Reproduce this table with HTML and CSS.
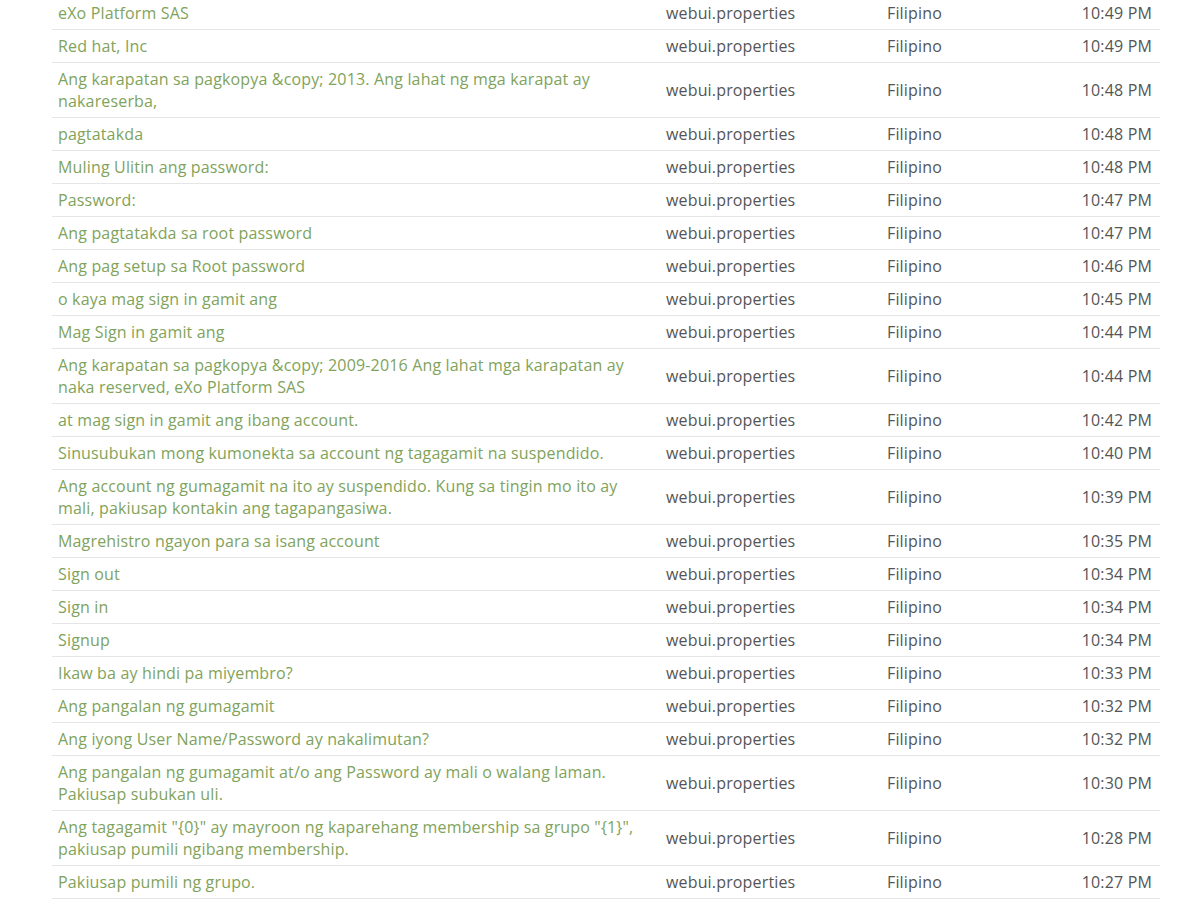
FILE: index.html
```html
<!DOCTYPE html>
<html>
<head>
<meta charset="utf-8">
<link rel="stylesheet" href="styles.css">
</head>
<body>
<table class="list">
<colgroup><col class="c-key"><col class="c-file"><col class="c-lang"><col class="c-time"></colgroup>
<tbody>
<tr><td class="key">eXo Platform SAS</td><td>webui.properties</td><td>Filipino</td><td class="time">10:49 PM</td></tr>
<tr><td class="key">Red hat, Inc</td><td>webui.properties</td><td>Filipino</td><td class="time">10:49 PM</td></tr>
<tr><td class="key">Ang karapatan sa pagkopya &amp;copy; 2013. Ang lahat ng mga karapat ay nakareserba,</td><td>webui.properties</td><td>Filipino</td><td class="time">10:48 PM</td></tr>
<tr><td class="key">pagtatakda</td><td>webui.properties</td><td>Filipino</td><td class="time">10:48 PM</td></tr>
<tr><td class="key">Muling Ulitin ang password:</td><td>webui.properties</td><td>Filipino</td><td class="time">10:48 PM</td></tr>
<tr><td class="key">Password:</td><td>webui.properties</td><td>Filipino</td><td class="time">10:47 PM</td></tr>
<tr><td class="key">Ang pagtatakda sa root password</td><td>webui.properties</td><td>Filipino</td><td class="time">10:47 PM</td></tr>
<tr><td class="key">Ang pag setup sa Root password</td><td>webui.properties</td><td>Filipino</td><td class="time">10:46 PM</td></tr>
<tr><td class="key">o kaya mag sign in gamit ang</td><td>webui.properties</td><td>Filipino</td><td class="time">10:45 PM</td></tr>
<tr><td class="key">Mag Sign in gamit ang</td><td>webui.properties</td><td>Filipino</td><td class="time">10:44 PM</td></tr>
<tr><td class="key">Ang karapatan sa pagkopya &amp;copy; 2009-2016 Ang lahat mga karapatan ay naka reserved, eXo Platform SAS</td><td>webui.properties</td><td>Filipino</td><td class="time">10:44 PM</td></tr>
<tr><td class="key">at mag sign in gamit ang ibang account.</td><td>webui.properties</td><td>Filipino</td><td class="time">10:42 PM</td></tr>
<tr><td class="key">Sinusubukan mong kumonekta sa account ng tagagamit na suspendido.</td><td>webui.properties</td><td>Filipino</td><td class="time">10:40 PM</td></tr>
<tr><td class="key">Ang account ng gumagamit na ito ay suspendido. Kung sa tingin mo ito ay mali, pakiusap kontakin ang tagapangasiwa.</td><td>webui.properties</td><td>Filipino</td><td class="time">10:39 PM</td></tr>
<tr><td class="key">Magrehistro ngayon para sa isang account</td><td>webui.properties</td><td>Filipino</td><td class="time">10:35 PM</td></tr>
<tr><td class="key">Sign out</td><td>webui.properties</td><td>Filipino</td><td class="time">10:34 PM</td></tr>
<tr><td class="key">Sign in</td><td>webui.properties</td><td>Filipino</td><td class="time">10:34 PM</td></tr>
<tr><td class="key">Signup</td><td>webui.properties</td><td>Filipino</td><td class="time">10:34 PM</td></tr>
<tr><td class="key">Ikaw ba ay hindi pa miyembro?</td><td>webui.properties</td><td>Filipino</td><td class="time">10:33 PM</td></tr>
<tr><td class="key">Ang pangalan ng gumagamit</td><td>webui.properties</td><td>Filipino</td><td class="time">10:32 PM</td></tr>
<tr><td class="key">Ang iyong User Name/Password ay nakalimutan?</td><td>webui.properties</td><td>Filipino</td><td class="time">10:32 PM</td></tr>
<tr><td class="key">Ang pangalan ng gumagamit at/o ang Password ay mali o walang laman. Pakiusap subukan uli.</td><td>webui.properties</td><td>Filipino</td><td class="time">10:30 PM</td></tr>
<tr><td class="key">Ang tagagamit "{0}" ay mayroon ng kaparehang membership sa grupo "{1}", pakiusap pumili ngibang membership.</td><td>webui.properties</td><td>Filipino</td><td class="time">10:28 PM</td></tr>
<tr><td class="key">Pakiusap pumili ng grupo.</td><td>webui.properties</td><td>Filipino</td><td class="time">10:27 PM</td></tr>
</tbody>
</table>
</body>
</html>
```

FILE: styles.css
```css
html, body {
  margin: 0;
  padding: 0;
  background: #ffffff;
}
body {
  font-family: "Open Sans", "Liberation Sans", sans-serif;
  font-size: 16px;
  line-height: 22px;
  letter-spacing: 0.16px;
  color: #555555;
  padding: 0 41px 0 52px;
}
.list {
  width: 1108px;
  margin-top: -3px;
  border-collapse: collapse;
  table-layout: fixed;
}
.c-key { width: 600px; }
.c-file { width: 229px; }
.c-lang { width: 150px; }
.list td {
  padding: 5px 6px;
  border-bottom: 1px solid #e6e6e6;
  vertical-align: middle;
}
.list td:nth-child(2) {
  padding-left: 14px;
}
.list td.key {
  color: #7fa35b;
}
.list td.time {
  text-align: right;
  padding-right: 8px;
}
```
